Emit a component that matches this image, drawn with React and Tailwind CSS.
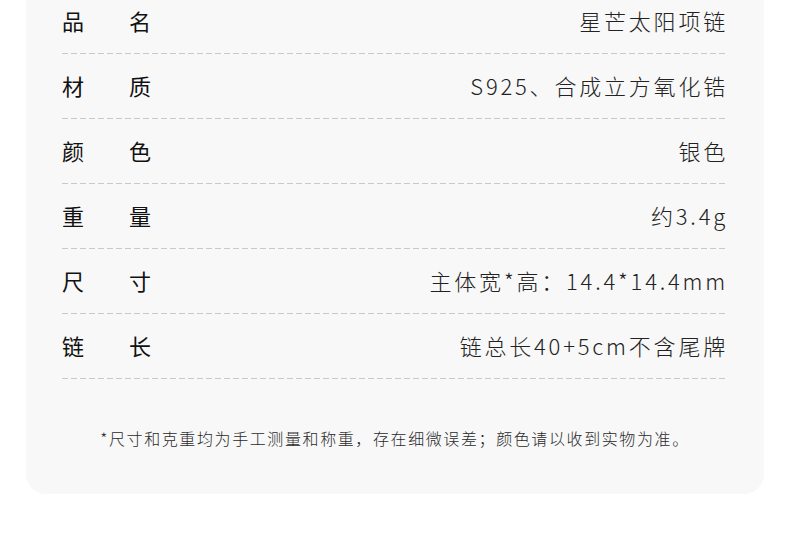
import React from "react";

const specs = [
  { label: ["品", "名"], value: "星芒太阳项链" },
  { label: ["材", "质"], value: "S925、合成立方氧化锆" },
  { label: ["颜", "色"], value: "银色" },
  { label: ["重", "量"], value: "约3.4g" },
  { label: ["尺", "寸"], value: "主体宽*高：14.4*14.4mm" },
  { label: ["链", "长"], value: "链总长40+5cm不含尾牌" },
];

const Dashed = () => (
  <div className="h-px w-full bg-[linear-gradient(to_right,#c9c9cd_6px,transparent_6px)] bg-[length:9px_1px] bg-repeat-x" />
);

const SpecRow = ({ label, value }) => (
  <div>
    <div className="flex h-[64px] items-center justify-between pb-[2px]">
      <div className="flex text-[22px] text-[#111111]">
        <span className="w-[67px]">{label[0]}</span>
        <span>{label[1]}</span>
      </div>
      <div className="text-[22px] font-light tracking-[2.8px] text-[#222222]">{value}</div>
    </div>
    <Dashed />
  </div>
);

export default function App() {
  return (
    <div
      className="min-h-[559px] bg-white px-[26px]"
      style={{ fontFamily: '"Noto Sans CJK SC", "Noto Sans", sans-serif' }}
    >
      <div className="-mt-[11px] rounded-b-[20px] bg-[#f8f8f8] px-[36px] pb-[44px]">
        {specs.map((s) => (
          <SpecRow key={s.value} label={s.label} value={s.value} />
        ))}
        <p className="pt-[47px] text-center text-[16px] font-light leading-[24px] tracking-[1.6px] text-[#2a2a2a]">
          *尺寸和克重均为手工测量和称重，存在细微误差；颜色请以收到实物为准。
        </p>
      </div>
    </div>
  );
}
